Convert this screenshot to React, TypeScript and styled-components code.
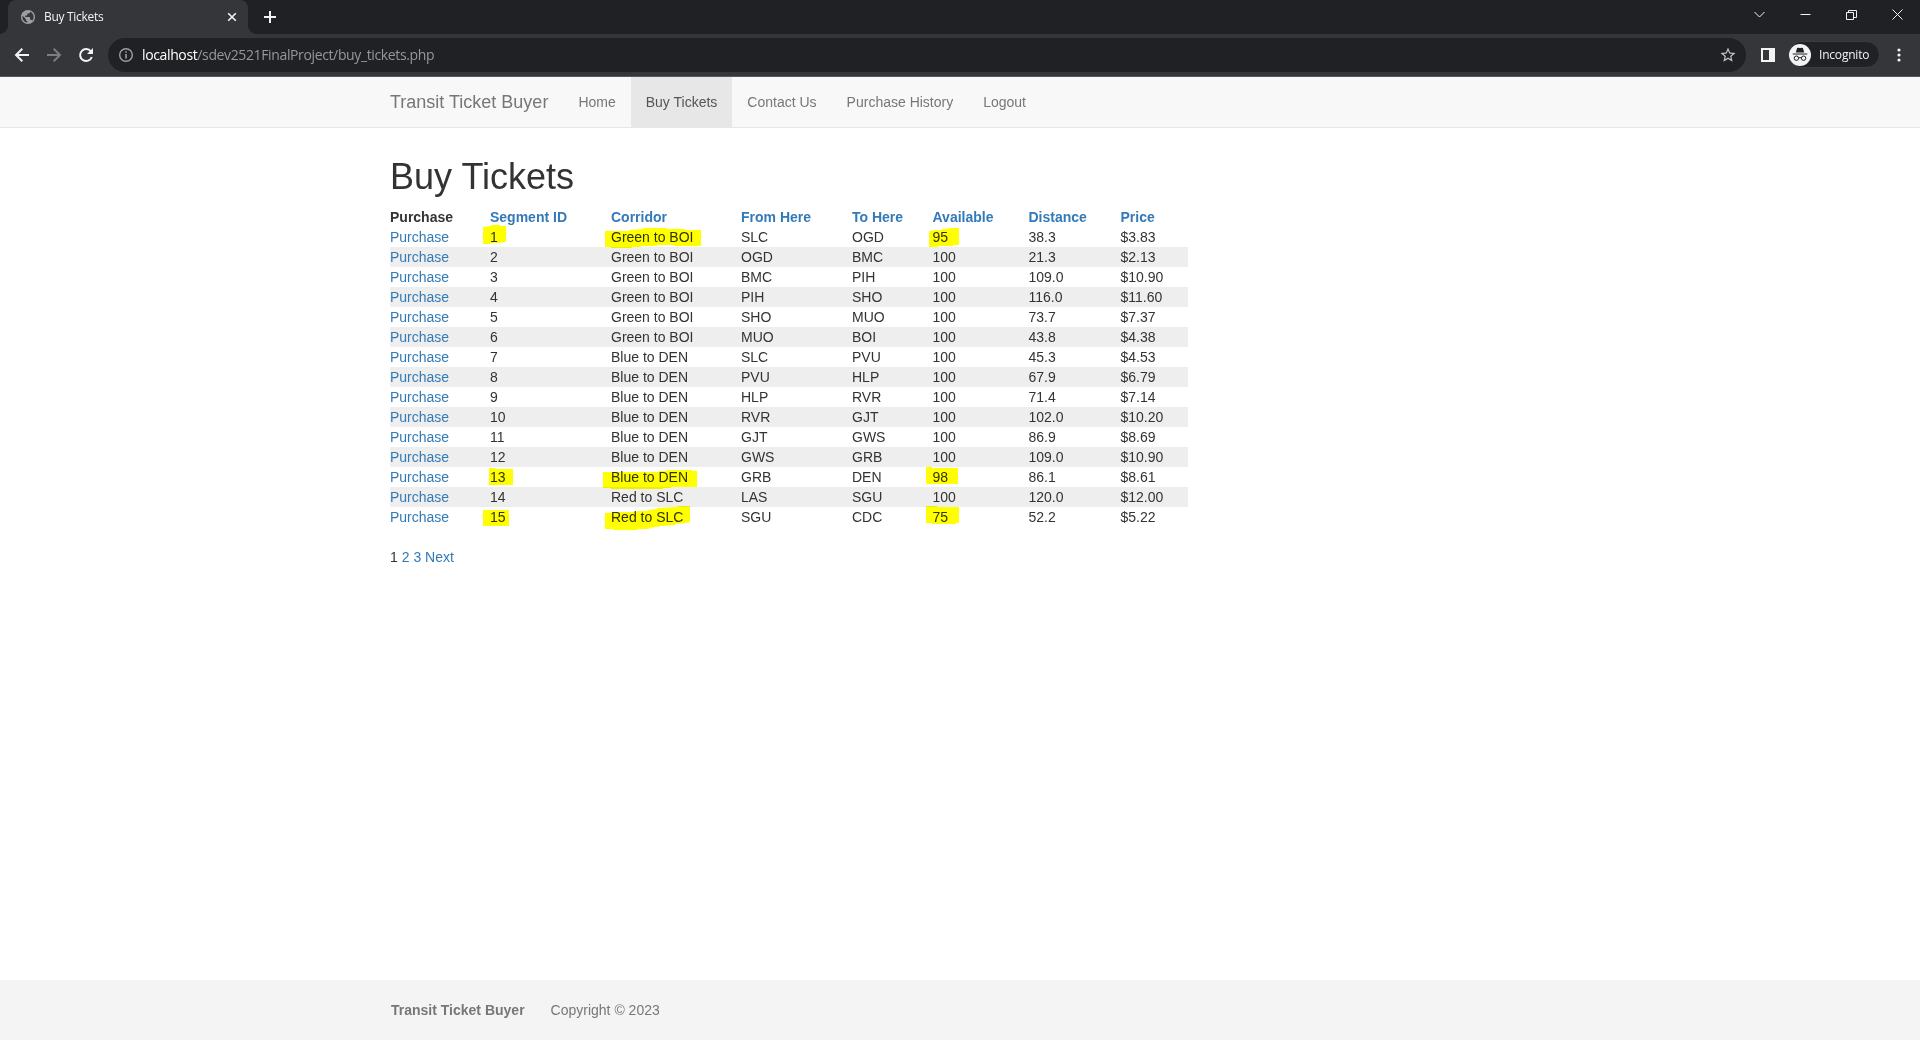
import React from 'react';
import styled, { createGlobalStyle } from 'styled-components';

const GlobalStyle = createGlobalStyle`
  *, *::before, *::after { box-sizing: border-box; }
  body {
    margin: 0;
    background: #fff;
    color: #333;
    font: 14px/20px "Liberation Sans", Arial, sans-serif;
  }
  a { color: #337ab7; text-decoration: none; }
`;

const Screen = styled.div`
  display: flex;
  flex-direction: column;
  height: 1040px;
  overflow: hidden;
`;

/* Browser chrome */

const TabStrip = styled.div`
  display: flex;
  flex: none;
  height: 34px;
  padding-left: 8px;
  background: #202124;
  font-family: "Open Sans", "Noto Sans", sans-serif;
`;

const Tab = styled.div`
  position: relative;
  display: flex;
  align-items: center;
  width: 240px;
  padding: 0 11px 0 12px;
  border-radius: 8px 8px 0 0;
  background: #35363a;
  color: #f1f3f4;

  &::before, &::after {
    content: '';
    position: absolute;
    bottom: 0;
    width: 8px;
    height: 8px;
  }
  &::before {
    left: -8px;
    background: radial-gradient(circle at 0 0, transparent 7.5px, #35363a 8px);
  }
  &::after {
    right: -8px;
    background: radial-gradient(circle at 100% 0, transparent 7.5px, #35363a 8px);
  }
`;

const TabTitle = styled.span`
  flex: 1;
  margin-left: 8px;
  font-size: 12px;
  letter-spacing: -0.3px;
  line-height: 18px;
`;

const NewTab = styled.div`
  display: flex;
  align-items: center;
  margin-left: 15px;
`;

const WindowControls = styled.div`
  display: flex;
  flex: none;
  margin-left: auto;
`;

const WindowButton = styled.div`
  display: flex;
  align-items: center;
  justify-content: center;
  width: 46px;
  height: 28px;
`;

const Toolbar = styled.div`
  display: flex;
  align-items: center;
  flex: none;
  height: 43px;
  padding: 0 0 1px 14px;
  background: #35363a;
  border-bottom: 1px solid #5b565c;
  font-family: "Open Sans", "Noto Sans", sans-serif;
`;

const HistoryButtons = styled.div`
  display: flex;
  gap: 16px;
  width: 94px;
`;

const AddressBar = styled.div`
  display: flex;
  align-items: center;
  flex: 1;
  height: 34px;
  padding: 0 9px 0 9px;
  border-radius: 17px;
  background: #202124;
`;

const Url = styled.span`
  flex: 1;
  margin-left: 7px;
  color: #94989d;
  font-size: 14px;
  letter-spacing: -0.37px;
  line-height: 20px;
  white-space: nowrap;
`;

const Host = styled.span`
  color: #fff;
`;

const ToolbarEnd = styled.div`
  display: flex;
  align-items: center;
  width: 174px;
  padding-left: 14px;
`;

const IncognitoPill = styled.div`
  display: flex;
  align-items: center;
  gap: 8px;
  width: 92px;
  height: 27px;
  margin: 0 17px 0 12px;
  border: 1px solid #3c3d41;
  border-radius: 14px;
  background: #202124;
  color: #f1f3f4;
  font-size: 12px;
  letter-spacing: -0.2px;
`;

/* Page */

const Container = styled.div`
  width: 1170px;
  margin: 0 auto;
  padding: 0 15px;
`;

const Navbar = styled.nav`
  flex: none;
  height: 51px;
  background: #f8f8f8;
  border-bottom: 1px solid #e7e7e7;
`;

const NavRow = styled(Container)`
  display: flex;
`;

const Brand = styled.a`
  padding: 15px 15px 15px 0;
  font-size: 18px;
  && { color: #777; }
`;

const NavLink = styled.a<{ $active?: boolean }>`
  padding: 15px;
  background: ${p => (p.$active ? '#e7e7e7' : 'transparent')};
  && { color: ${p => (p.$active ? '#555' : '#777')}; }
`;

const Main = styled.main`
  flex: 1;
`;

const Title = styled.h1`
  margin: 29px 0 10px;
  font-size: 36px;
  font-weight: 400;
  line-height: 40px;
`;

const Grid = styled.table`
  width: 798px;
  table-layout: fixed;
  border-collapse: collapse;
  border-spacing: 0;
`;

const Column = styled.col<{ $width?: number }>`
  width: ${p => (p.$width ? `${p.$width}px` : 'auto')};
`;

const HeadCell = styled.th`
  padding: 0;
  text-align: left;
  font-weight: 700;
`;

const Row = styled.tr<{ $striped: boolean }>`
  height: 20px;
  background: ${p => (p.$striped ? '#eee' : 'transparent')};
`;

const Cell = styled.td`
  position: relative;
  padding: 0;
`;

const Marker = styled.svg`
  position: absolute;
  top: 0;
  left: 0;
  width: 1px;
  height: 1px;
  overflow: visible;
  fill: #ff0;
  mix-blend-mode: multiply;
`;

const Pager = styled.div`
  margin-top: 20px;
`;

const Footer = styled.footer`
  flex: none;
  height: 60px;
  background: #f4f4f4;
`;

const FooterRow = styled(Container)`
  display: flex;
  gap: 26px;
  padding-top: 20px;
  padding-left: 16px;
  color: #777;
`;

const GlobeIcon = () => (
  <svg width="16" height="16" viewBox="0.6 0.6 22.8 22.8" fill="#9aa0a6">
    <path d="M12 2C6.48 2 2 6.48 2 12s4.48 10 10 10 10-4.48 10-10S17.52 2 12 2zm-1 17.93c-3.95-.49-7-3.85-7-7.93 0-.62.08-1.21.21-1.79L9 15v1c0 1.100.9 2 2 2v1.930zm6.900-2.540c-.260-.810-1-1.390-1.900-1.390h-1v-3c0-.550-.450-1-1-1H8v-2h2c.550 0 1-.450 1-1V7h2c1.100 0 2-.900 2-2v-.410c2.930 1.190 5 4.060 5 7.410 0 2.080-.800 3.970-2.100 5.390z" />
  </svg>
);

const CloseIcon = () => (
  <svg width="10" height="10" viewBox="0 0 10 10" stroke="#f1f3f4" strokeWidth="1.6">
    <path d="m1.2 1.2 7.6 7.6M8.8 1.2 1.2 8.8" />
  </svg>
);

const PlusIcon = () => (
  <svg width="14" height="14" viewBox="0 0 14 14" stroke="#f1f3f4" strokeWidth="2">
    <path d="M7 1v12M1 7h12" />
  </svg>
);

const BackIcon = () => (
  <svg width="16" height="16" viewBox="0 0 16 16" fill="none" stroke="#f1f3f4" strokeWidth="2">
    <path d="M15 8H2.5M8.3 1.7 2 8l6.3 6.3" />
  </svg>
);

const ForwardIcon = () => (
  <svg width="16" height="16" viewBox="0 0 16 16" fill="none" stroke="#7d7e82" strokeWidth="2">
    <path d="M1 8h12.5M7.7 1.7 14 8l-6.3 6.3" />
  </svg>
);

const ReloadIcon = () => (
  <svg width="16" height="16" viewBox="0 0 16 16">
    <path d="M12.9 4.4A6 6 0 1 0 13.8 10" fill="none" stroke="#f1f3f4" strokeWidth="2" />
    <path d="M15 1v6H9z" fill="#f1f3f4" />
  </svg>
);

const InfoIcon = () => (
  <svg width="18" height="18" viewBox="0 0 18 18">
    <circle cx="9" cy="9" r="6.3" fill="none" stroke="#9aa0a6" strokeWidth="1.4" />
    <path d="M9 8v4.4M9 5.2v1.6" stroke="#9aa0a6" strokeWidth="1.6" />
  </svg>
);

const StarIcon = () => (
  <svg width="18" height="18" viewBox="0 0 24 24" fill="#c4c7c9">
    <path d="m22 9.24-7.19-.62L12 2 9.19 8.63 2 9.24l5.46 4.73L5.82 21 12 17.27 18.18 21l-1.63-7.03L22 9.24zM12 15.4l-3.76 2.27 1-4.28-3.32-2.88 4.38-.38L12 6.1l1.71 4.04 4.38.38-3.32 2.88 1 4.28L12 15.4z" />
  </svg>
);

const SidePanelIcon = () => (
  <svg width="16" height="16" viewBox="0 0 16 16" fill="#f1f3f4">
    <path d="M1 1h14v14H1zM3 3v10h6V3z" fillRule="evenodd" />
  </svg>
);

const IncognitoIcon = () => (
  <svg width="22" height="22" viewBox="0 0 22 22">
    <circle cx="11" cy="11" r="11" fill="#f1f3f4" />
    <path d="M6.800 8.400 8 4.200q.3-.700 1-.500l2 .400 2-.400q.700-.200 1 .500l1.200 4.200zM3.700 9.400h14.600v1H3.700z" fill="#202124" />
    <g fill="none" stroke="#202124">
      <circle cx="7.4" cy="14.2" r="2.2" />
      <circle cx="14.6" cy="14.2" r="2.2" />
      <path d="M9.6 14q1.400-.800 2.800 0" />
    </g>
  </svg>
);

const MenuIcon = () => (
  <svg width="4" height="16" viewBox="0 0 4 16" fill="#f1f3f4">
    <circle cx="2" cy="3" r="1.6" />
    <circle cx="2" cy="8" r="1.6" />
    <circle cx="2" cy="13" r="1.6" />
  </svg>
);

const windowIcons = [
  'M0.5 3 5.5 8 10.5 3',
  'M.5 5.5h10',
  'M.5 3.5h7v7h-7zM2.5 3.5v-2h8v7h-3',
  'm.5.5 10 10M10.5.5l-10 10',
];

const headings = ['Purchase', 'Segment ID', 'Corridor', 'From Here', 'To Here', 'Available', 'Distance', 'Price'];
const columnWidths = [100, 121, 130, 111, 80.5, 96, 92];

const segments: string[][] = [
  ['1', 'Green to BOI', 'SLC', 'OGD', '95', '38.3', '$3.83'],
  ['2', 'Green to BOI', 'OGD', 'BMC', '100', '21.3', '$2.13'],
  ['3', 'Green to BOI', 'BMC', 'PIH', '100', '109.0', '$10.90'],
  ['4', 'Green to BOI', 'PIH', 'SHO', '100', '116.0', '$11.60'],
  ['5', 'Green to BOI', 'SHO', 'MUO', '100', '73.7', '$7.37'],
  ['6', 'Green to BOI', 'MUO', 'BOI', '100', '43.8', '$4.38'],
  ['7', 'Blue to DEN', 'SLC', 'PVU', '100', '45.3', '$4.53'],
  ['8', 'Blue to DEN', 'PVU', 'HLP', '100', '67.9', '$6.79'],
  ['9', 'Blue to DEN', 'HLP', 'RVR', '100', '71.4', '$7.14'],
  ['10', 'Blue to DEN', 'RVR', 'GJT', '100', '102.0', '$10.20'],
  ['11', 'Blue to DEN', 'GJT', 'GWS', '100', '86.9', '$8.69'],
  ['12', 'Blue to DEN', 'GWS', 'GRB', '100', '109.0', '$10.90'],
  ['13', 'Blue to DEN', 'GRB', 'DEN', '98', '86.1', '$8.61'],
  ['14', 'Red to SLC', 'LAS', 'SGU', '100', '120.0', '$12.00'],
  ['15', 'Red to SLC', 'SGU', 'CDC', '75', '52.2', '$5.22'],
];

/* Highlighter strokes, keyed by segment ID and column, relative to the cell corner. */
const strokes: Record<string, string> = {
  '1:0': '-7,0 1,-1 1,-2 10,-2 10,-1 16,-1 16,15 8,16 0,16 0,17 -7,17',
  '1:1': '-6,4 18,4 18,3 32,2 32,1 56,1 56,2 74,2 74,3 90,3 90,19 63,19 63,18 46,18 46,19 30,19 30,20 21,20 21,21 0,21 0,20 -6,20',
  '1:4': '-4,4 3,3 9,3 9,2 16,2 16,1 26,1 26,18 20,18 20,19 5,19 5,20 -4,20',
  '13:0': '-1,1 5,1 5,2 23,2 23,18 -1,18',
  '13:1': '-8,5 48,5 48,4 55,4 55,3 81,3 81,4 86,4 86,20 60,20 60,21 52,21 52,22 0,22 0,21 -8,21',
  '13:4': '-7,0 -1,0 -1,1 25,1 25,17 -7,17',
  '15:0': '-7,3 19,3 19,19 -7,19',
  '15:1': '-6,6 8,5 26,5 26,4 37,4 37,3 46,2 46,1 65,0 68,-1 79,-1 79,15 74,16 64,17 64,18 50,19 38,21 38,22 27,22 27,23 2,23 2,22 -6,22',
  '15:4': '-7,-1 4,-1 4,0 26,0 26,16 23,16 23,17 -1,17 -1,16 -7,16',
};

export default function App() {
  return (
    <>
      <GlobalStyle />
      <Screen>
        <TabStrip>
          <Tab>
            <GlobeIcon />
            <TabTitle>Buy Tickets</TabTitle>
            <CloseIcon />
          </Tab>
          <NewTab><PlusIcon /></NewTab>
          <WindowControls>
            {windowIcons.map(d => (
              <WindowButton key={d}>
                <svg width="11" height="11" viewBox="0 0 11 11" fill="none" stroke="#f1f3f4"><path d={d} /></svg>
              </WindowButton>
            ))}
          </WindowControls>
        </TabStrip>
        <Toolbar>
          <HistoryButtons>
            <BackIcon />
            <ForwardIcon />
            <ReloadIcon />
          </HistoryButtons>
          <AddressBar>
            <InfoIcon />
            <Url><Host>localhost</Host>/sdev2521FinalProject/buy_tickets.php</Url>
            <StarIcon />
          </AddressBar>
          <ToolbarEnd>
            <SidePanelIcon />
            <IncognitoPill><IncognitoIcon />Incognito</IncognitoPill>
            <MenuIcon />
          </ToolbarEnd>
        </Toolbar>

        <Navbar>
          <NavRow>
            <Brand href="#">Transit Ticket Buyer</Brand>
            <NavLink href="#">Home</NavLink>
            <NavLink href="#" $active>Buy Tickets</NavLink>
            <NavLink href="#">Contact Us</NavLink>
            <NavLink href="#">Purchase History</NavLink>
            <NavLink href="#">Logout</NavLink>
          </NavRow>
        </Navbar>

        <Main>
          <Container>
            <Title>Buy Tickets</Title>
            <Grid>
              <colgroup>
                {columnWidths.map((w, i) => <Column key={i} $width={w} />)}
                <Column />
              </colgroup>
              <thead>
                <Row $striped={false}>
                  {headings.map((h, i) => (
                    <HeadCell key={h}>{i === 0 ? h : <a href="#">{h}</a>}</HeadCell>
                  ))}
                </Row>
              </thead>
              <tbody>
                {segments.map((values, r) => (
                  <Row key={values[0]} $striped={r % 2 === 1}>
                    <Cell><a href="#">Purchase</a></Cell>
                    {values.map((v, c) => {
                      const points = strokes[`${values[0]}:${c}`];
                      return (
                        <Cell key={c}>
                          {v}
                          {points && <Marker><polygon points={points} /></Marker>}
                        </Cell>
                      );
                    })}
                  </Row>
                ))}
              </tbody>
            </Grid>
            <Pager>1 <a href="#">2</a> <a href="#">3</a> <a href="#">Next</a></Pager>
          </Container>
        </Main>

        <Footer>
          <FooterRow>
            <strong>Transit Ticket Buyer</strong>
            <span>Copyright © 2023</span>
          </FooterRow>
        </Footer>
      </Screen>
    </>
  );
}
